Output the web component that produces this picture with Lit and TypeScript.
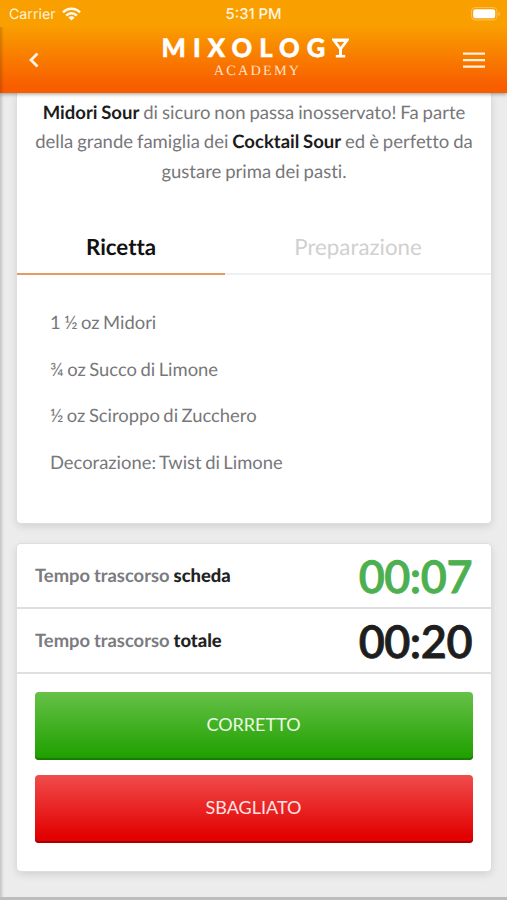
import { LitElement, html, css } from "lit";
import { customElement, property } from "lit/decorators.js";

@customElement("status-bar")
class StatusBar extends LitElement {
  static styles = css`
    :host { display: grid; grid-template-columns: 1fr auto 1fr; align-items: center; height: 27px; padding: 0 6px 0 9px; box-sizing: border-box; font: 15px/27px Inter, sans-serif; color: #fff3d6; }
    .left { display: flex; align-items: center; gap: 6px; }
    .carrier { font-size: 14.2px; padding-top: 1px; }
    .time { font-weight: 500; font-size: 14.8px; color: #fff6e0; margin-right: 3px; padding-top: 1px; }
    .battery { justify-self: end; }
    svg { display: block; }
  `;
  render() {
    return html`
      <div class="left"><span class="carrier">Carrier</span>
        <svg width="19" height="14" viewBox="0 0 19 14" fill="none" stroke="#fffaf0" stroke-width="2.5">
          <path d="M1 5.3C5.8 .5 13.2 .5 18 5.3" /><path d="M4.2 8.6C7.2 5.6 11.8 5.6 14.8 8.6" />
          <path d="M9.5 13.6L6.4 10.5C8.2 8.9 10.8 8.9 12.6 10.5Z" fill="#fffaf0" stroke="none" />
        </svg>
      </div>
      <span class="time">5:31 PM</span>
      <svg class="battery" width="31" height="16" viewBox="0 0 31 16">
        <rect x="1.5" y="1.5" width="25.5" height="12.4" rx="4" fill="none" stroke="#fff" stroke-opacity=".3" stroke-width="1.2" />
        <rect x="3.2" y="3.2" width="22" height="9" rx="2.2" fill="#fff" />
        <path d="M28.6 6v4c1.6-.5 1.6-3.5 0-4z" fill="#fff" fill-opacity=".5" />
      </svg>`;
  }
}

@customElement("brand-bar")
class BrandBar extends LitElement {
  static styles = css`
    :host { display: grid; grid-template-columns: 48px 1fr 48px; height: 66px; }
    .back { margin: 25px 0 0 29px; }
    .menu { margin: 25px 0 0 4px; }
    svg { display: block; }
    .brand { display: flex; flex-direction: column; align-items: center; color: #fff; }
    .name { display: flex; height: 24px; margin: 9px 0 0 4px; font: 900 25.5px/24px Lato, sans-serif; letter-spacing: 7.1px; -webkit-text-stroke: 0.5px #fff; white-space: nowrap; }
    .glass { margin-top: 2px; }
    .sub { font: 14.3px/16px "Liberation Serif", serif; letter-spacing: 2.2px; margin: 3px 0 0 8px; color: #ffe3cc; white-space: nowrap; }
  `;
  render() {
    return html`
      <svg class="back" width="10" height="16" viewBox="0 0 10 16" fill="none" stroke="#fff3e8" stroke-width="2.8"><path d="M8.5 1.5L2 8l6.500 6.5" /></svg>
      <div class="brand">
        <div class="name"><span>MIXOLOG</span>
          <svg class="glass" width="17" height="20" viewBox="0 0 17 20" fill="none" stroke="#fff" stroke-width="2.6">
            <path d="M1.6 1.900H15.400L8.500 11Z" /><path d="M2 2.600H15" /><path d="M8.500 10.500V18" stroke-width="3" /><path d="M3.800 18.200H13.200" />
          </svg>
        </div>
        <div class="sub">ACADEMY</div>
      </div>
      <svg class="menu" width="22" height="17" viewBox="0 0 22 17" fill="#fff0dc"><path d="M0 .5h22v2.3H0zM0 7h22v2.3H0zM0 13.5h22v2.3H0z" /></svg>`;
  }
}

@customElement("timer-row")
class TimerRow extends LitElement {
  @property() label = "";
  @property() value = "";
  static styles = css`
    :host { display: flex; align-items: center; justify-content: space-between; height: 65px; box-sizing: border-box; padding: 0 19px 0 18px; border-bottom: 2px solid #dfdfdf; font-family: Lato, sans-serif; color: #1e1e1e; }
    .label { font-size: 18.4px; font-weight: 700; word-spacing: -0.6px; padding-bottom: 2px; color: #7b7b80; white-space: nowrap; }
    b { color: #222; }
    .value { font-size: 45px; font-weight: 600; letter-spacing: -0.5px; line-height: 60px; -webkit-text-stroke: 0.8px currentColor; color: inherit; }
    :host([running]) .value { color: #4caf50; }
  `;
  render() {
    return html`<span class="label">Tempo trascorso <b>${this.label}</b></span><span class="value">${this.value}</span>`;
  }
}

@customElement("app-root")
class AppRoot extends LitElement {
  static styles = css`
    :host { display: block; position: relative; height: 900px; overflow: hidden; background: #ececec; font-family: Lato, sans-serif; font-variant-ligatures: none; text-rendering: geometricPrecision; color: #77777a; }
    .header { position: relative; height: 93px; background: linear-gradient(#f99f00 0 27%, #f85d00 93%); box-shadow: 0 1px 4px rgba(0, 0, 0, 0.4); }
    .edge { position: absolute; left: 0; top: 27px; bottom: 0; width: 4px; background: linear-gradient(90deg, rgba(0, 0, 0, 0.17), rgba(0, 0, 0, 0)); }
    .floor { position: absolute; left: 0; right: 0; bottom: 0; height: 3px; background: #bdbdbd; }
    .card { margin: 0 16px 0 17px; background: #fff; border-radius: 0 0 4px 4px; box-shadow: 0 0 0 1px #dedede, 0 3px 9px rgba(0, 0, 0, 0.13); }
    .recipe { height: 430px; }
    .timers { margin-top: 21px; height: 327px; border-radius: 4px; }
    .intro { margin: 0; padding-top: 5px; font-size: 18.5px; word-spacing: -0.8px; line-height: 29.3px; text-align: center; white-space: nowrap; }
    strong { color: #1c1c1c; }
    .tabs { display: grid; grid-template-columns: 208px 1fr; margin-top: 32.5px; height: 57px; box-sizing: border-box; font-size: 22.3px; line-height: 55px; text-align: center; }
    .tab { padding-top: 1px; box-sizing: border-box; height: 57px; border-bottom: 2px solid #f0f0f0; color: #d0d0d0; }
    .tab.active { border-bottom-color: #e59a62; color: #111; font-weight: 700; }
    .list { display: grid; grid-auto-rows: 46.4px; margin: 0; padding: 24px 33px 0; list-style: none; font-size: 18.4px; word-spacing: -1.2px; line-height: 46.4px; white-space: nowrap; }
    .actions { display: grid; gap: 15px; padding: 18px 18px 0 18px; }
    .btn { height: 68px; padding: 0 1px 5px 0; border: 0; border-radius: 4px; box-sizing: border-box; font: 18px Lato, sans-serif; color: #e9fbe4; }
    .ok { background: linear-gradient(#66c148, #20a000 96%); box-shadow: inset 0 -2px #197c04; }
    .ko { background: linear-gradient(#f04c4c, #e20000 92%); box-shadow: inset 0 -2px #a80000; color: #ffe3e3; }
  `;
  render() {
    const recipe = ["1 ½ oz Midori", "¾ oz Succo di Limone", "½ oz Sciroppo di Zucchero", "Decorazione: Twist di Limone"];
    return html`
      <div class="header"><status-bar></status-bar><brand-bar></brand-bar></div>
      <section class="card recipe">
        <p class="intro"><strong>Midori Sour</strong> di sicuro non passa inosservato! Fa parte<br />della grande famiglia dei <strong>Cocktail Sour</strong> ed è perfetto da<br />gustare prima dei pasti.</p>
        <div class="tabs"><div class="tab active">Ricetta</div><div class="tab">Preparazione</div></div>
        <ul class="list">${recipe.map((item) => html`<li>${item}</li>`)}</ul>
      </section>
      <section class="card timers">
        <timer-row running label="scheda" value="00:07"></timer-row>
        <timer-row label="totale" value="00:20"></timer-row>
        <div class="actions"><button class="btn ok">CORRETTO</button><button class="btn ko">SBAGLIATO</button></div>
      </section>
      <div class="edge"></div><div class="floor"></div>`;
  }
}
